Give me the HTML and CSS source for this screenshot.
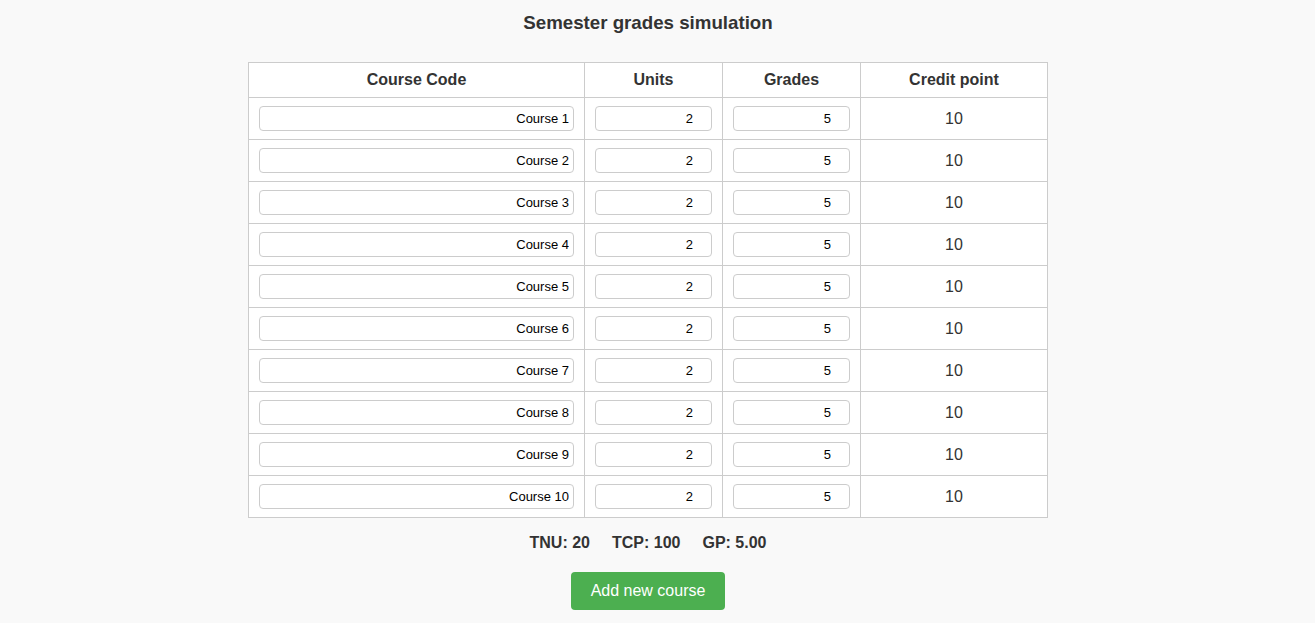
FILE: index.html
```html
<!DOCTYPE html>
<html lang="en">
<head>
<meta charset="utf-8">
<title>Semester grades simulation</title>
<link rel="stylesheet" href="styles.css">
</head>
<body>
<main class="page">
  <h2 class="title">Semester grades simulation</h2>
  <table class="grades">
    <colgroup>
      <col class="c-code"><col class="c-units"><col class="c-grade"><col class="c-cp">
    </colgroup>
    <thead>
      <tr><th>Course Code</th><th>Units</th><th>Grades</th><th>Credit point</th></tr>
    </thead>
    <tbody>
      <tr><td><input class="field" value="Course 1"></td><td><input class="field num" value="2"></td><td><input class="field num" value="5"></td><td class="cp">10</td></tr>
      <tr><td><input class="field" value="Course 2"></td><td><input class="field num" value="2"></td><td><input class="field num" value="5"></td><td class="cp">10</td></tr>
      <tr><td><input class="field" value="Course 3"></td><td><input class="field num" value="2"></td><td><input class="field num" value="5"></td><td class="cp">10</td></tr>
      <tr><td><input class="field" value="Course 4"></td><td><input class="field num" value="2"></td><td><input class="field num" value="5"></td><td class="cp">10</td></tr>
      <tr><td><input class="field" value="Course 5"></td><td><input class="field num" value="2"></td><td><input class="field num" value="5"></td><td class="cp">10</td></tr>
      <tr><td><input class="field" value="Course 6"></td><td><input class="field num" value="2"></td><td><input class="field num" value="5"></td><td class="cp">10</td></tr>
      <tr><td><input class="field" value="Course 7"></td><td><input class="field num" value="2"></td><td><input class="field num" value="5"></td><td class="cp">10</td></tr>
      <tr><td><input class="field" value="Course 8"></td><td><input class="field num" value="2"></td><td><input class="field num" value="5"></td><td class="cp">10</td></tr>
      <tr><td><input class="field" value="Course 9"></td><td><input class="field num" value="2"></td><td><input class="field num" value="5"></td><td class="cp">10</td></tr>
      <tr><td><input class="field" value="Course 10"></td><td><input class="field num" value="2"></td><td><input class="field num" value="5"></td><td class="cp">10</td></tr>
    </tbody>
  </table>
  <div class="totals">
    <span>TNU: 20</span>
    <span>TCP: 100</span>
    <span>GP: 5.00</span>
  </div>
  <button class="add-btn" type="button">Add new course</button>
</main>
</body>
</html>
```

FILE: styles.css
```css
html, body {
  margin: 0;
  padding: 0;
  background: #f9f9f9;
}

body {
  font-family: "Liberation Sans", Arial, sans-serif;
  color: #333;
}

.page {
  display: flex;
  flex-direction: column;
  align-items: center;
  padding: 12px 19px 0 0;
}

.title {
  margin: 0 0 29px;
  font-size: 18.72px;
  line-height: 21px;
  font-weight: bold;
  color: #333;
}

.grades {
  width: 799px;
  border-collapse: collapse;
  background: #fff;
  table-layout: fixed;
}

.c-code { width: 336px; }
.c-units { width: 138px; }
.c-grade { width: 138px; }
.c-cp { width: 187px; }

.grades th,
.grades td {
  border: 1px solid #ccc;
  text-align: center;
}

.grades th {
  padding: 8px 10px;
  font-size: 16px;
  line-height: 18px;
  font-weight: bold;
  color: #333;
}

.grades td {
  padding: 8px 10px;
  height: 25px;
  font-size: 16px;
  line-height: 18px;
}

.grades td.cp {
  color: #333;
}

.field {
  display: block;
  box-sizing: border-box;
  width: 100%;
  height: 25px;
  margin: 0;
  padding: 0 4px;
  border: 1px solid #ccc;
  border-radius: 4px;
  background: #fff;
  font-family: "Liberation Sans", Arial, sans-serif;
  font-size: 13px;
  color: #000;
  text-align: right;
}

.field.num {
  padding-right: 18px;
}

.totals {
  display: flex;
  gap: 22px;
  margin-top: 16px;
  font-size: 16px;
  line-height: 18px;
  font-weight: bold;
  color: #333;
}

.add-btn {
  margin-top: 20px;
  padding: 10px 20px;
  border: none;
  border-radius: 4px;
  background: #4caf50;
  color: #fff;
  font-family: "Liberation Sans", Arial, sans-serif;
  font-size: 16px;
  line-height: 18px;
  cursor: pointer;
}
```
